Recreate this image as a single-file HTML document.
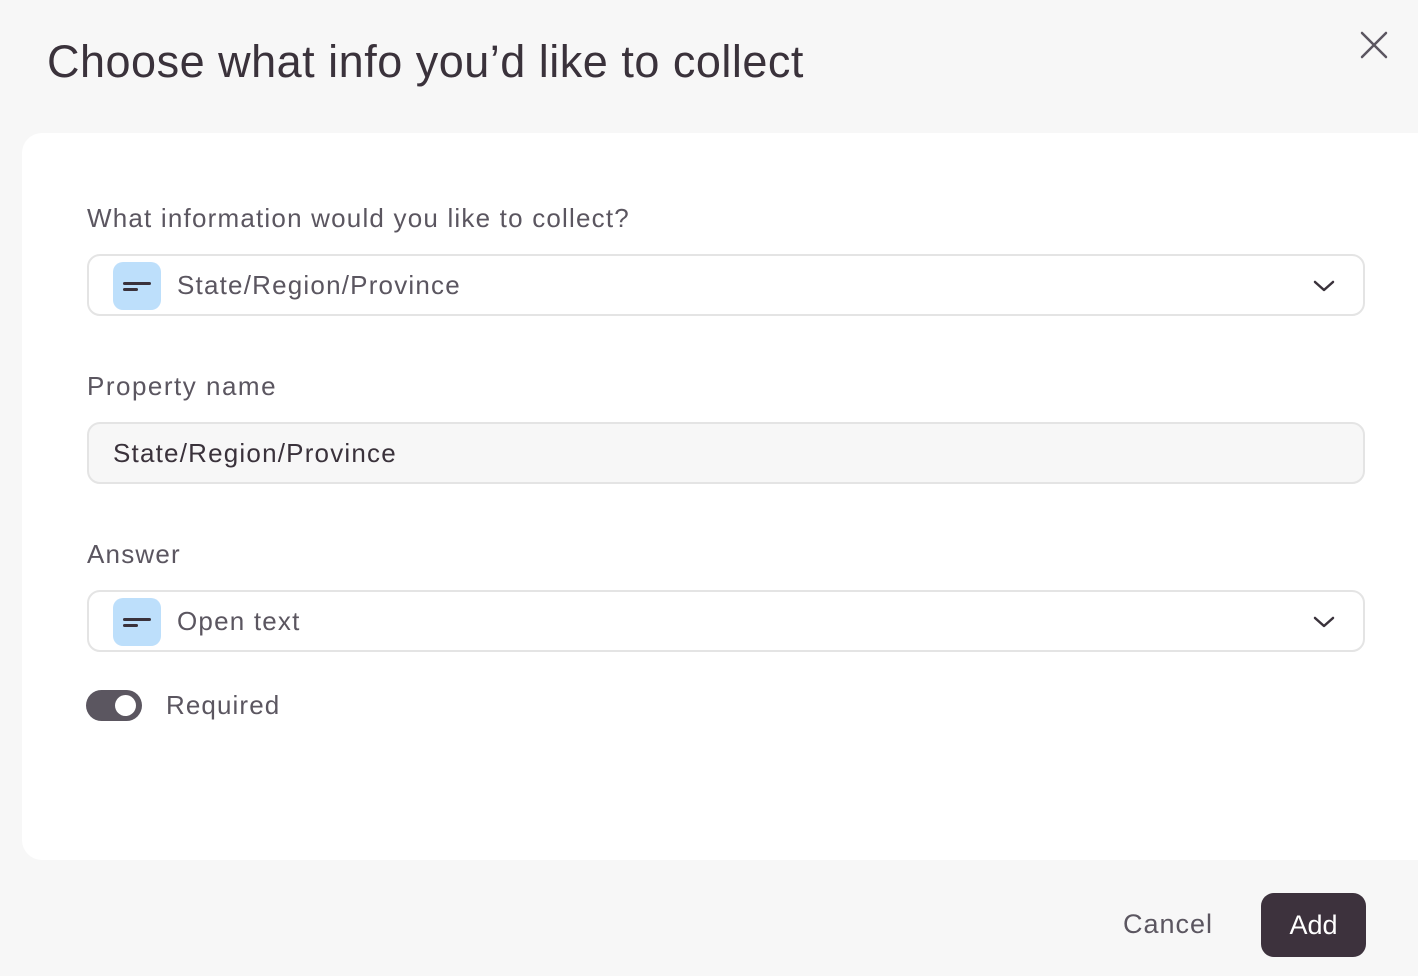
<!DOCTYPE html>
<html><head><style>
*{margin:0;padding:0;box-sizing:border-box}
body{width:1418px;height:976px;background:#f7f7f7;font-family:"Liberation Sans",sans-serif;position:relative;overflow:hidden;color:#5b5660}
.t{position:absolute;left:47px;top:36px;font-size:45px;color:#3a323b;letter-spacing:0.5px}
.x{position:absolute;left:1360px;top:31px}
.card{position:absolute;left:22px;top:133px;width:1420px;height:727px;background:#fff;border-radius:20px}
.lbl{position:absolute;left:87px;font-size:26px;color:#5b5660;letter-spacing:1.2px}
.f{position:absolute;left:87px;width:1278px;height:62px;border:2px solid #e4e4e4;border-radius:13px;background:#fff}
.f.g{background:#f7f7f7}
.ic{position:absolute;left:24px;top:6px;width:48px;height:48px;border-radius:10px;background:#bddffb}
.ic i{position:absolute;left:10px;height:3px;background:#3a323b;border-radius:2px}
.ft{position:absolute;left:88px;top:14px;font-size:26px;color:#5b5660;letter-spacing:1.2px}
.chev{position:absolute;right:28px;top:23px}
</style></head><body>
<div class="t">Choose what info you’d like to collect</div>
<svg class="x" width="28" height="28" viewBox="0 0 28 28"><path d="M2 2L26 26M26 2L2 26" stroke="#5b5660" stroke-width="2.5" stroke-linecap="round"/></svg>
<div class="card"></div>
<div class="lbl" style="top:203px">What information would you like to collect?</div>
<div class="f" style="top:254px"><div class="ic"><i style="top:20px;width:28px"></i><i style="top:26px;width:15px"></i></div><div class="ft">State/Region/Province</div>
<svg class="chev" width="22" height="14" viewBox="0 0 22 14"><path d="M2 3L11 11L20 3" fill="none" stroke="#3a323b" stroke-width="2.5" stroke-linecap="round" stroke-linejoin="round"/></svg></div>
<div class="lbl" style="top:371px;letter-spacing:1.5px">Property name</div>
<div class="f g" style="top:422px"><div class="ft" style="left:24px;color:#3a323b">State/Region/Province</div></div>
<div class="lbl" style="top:539px">Answer</div>
<div class="f" style="top:590px"><div class="ic"><i style="top:20px;width:28px"></i><i style="top:26px;width:15px"></i></div><div class="ft">Open text</div>
<svg class="chev" width="22" height="14" viewBox="0 0 22 14"><path d="M2 3L11 11L20 3" fill="none" stroke="#3a323b" stroke-width="2.5" stroke-linecap="round" stroke-linejoin="round"/></svg></div>
<div style="position:absolute;left:86px;top:690px;width:56px;height:31px;border-radius:16px;background:#5b5660"><div style="position:absolute;left:29px;top:5px;width:21px;height:21px;border-radius:50%;background:#fff"></div></div>
<div class="lbl" style="left:166px;top:690px;letter-spacing:1.1px">Required</div>
<div style="position:absolute;left:1123px;top:909px;font-size:27px;color:#5b5660;letter-spacing:1px">Cancel</div>
<div style="position:absolute;left:1261px;top:893px;width:105px;height:64px;border-radius:13px;background:#3d323d;color:#fff;font-size:27px;text-align:center;line-height:64px">Add</div>
</body></html>
